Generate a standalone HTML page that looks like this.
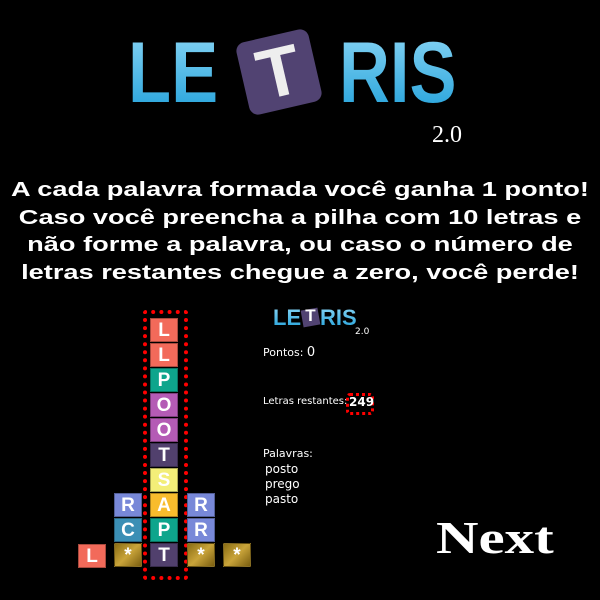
<!DOCTYPE html>
<html><head><meta charset="utf-8"><style>
body{margin:0;width:600px;height:600px;background:#000;position:relative;overflow:hidden;font-family:"Liberation Sans",sans-serif}
.a{position:absolute}
.logo{font-weight:bold;background:linear-gradient(#8fd8f6,#1a9dd8);-webkit-background-clip:text;background-clip:text;color:transparent}
.t{line-height:27.5px;color:#fff;font-weight:bold;font-size:20px;text-align:center;width:460px;left:70px;top:177px;font-family:"Liberation Sans",sans-serif;transform:scaleX(1.36);transform-origin:50% 0;white-space:nowrap}
.c{position:absolute;width:28px;height:24px;color:#fff;font-size:19px;font-weight:bold;text-align:center;line-height:24px;border:1px solid rgba(0,0,0,.3);box-sizing:border-box}
.g{background:linear-gradient(135deg,#8a6d14,#c9a43a,#7a5e10)}
.s{color:#fff;font-size:11px;font-family:"DejaVu Sans",sans-serif}
</style></head><body>
<div class="a logo" style="left:128px;top:24px;font-size:86px;transform:scaleX(0.82);transform-origin:0 0">LE</div>
<div class="a" style="left:242px;top:35px;width:74px;height:74px;background:#514372;border-radius:9px;transform:rotate(-13deg)"></div>
<div class="a" style="left:254px;top:32px;width:50px;font-size:70px;font-weight:bold;color:#eee;text-align:center;transform:rotate(-13deg)">T</div>
<div class="a logo" style="left:339px;top:24px;font-size:86px;transform:scaleX(0.82);transform-origin:0 0">RIS</div>
<div class="a" style="left:432px;top:122px;color:#fff;font-size:24px;font-family:'Liberation Serif',serif">2.0</div>
<div class="a t">A cada palavra formada você ganha 1 ponto!<br>Caso você preencha a pilha com 10 letras e<br>não forme a palavra, ou caso o número de<br>letras restantes chegue a zero, você perde!</div>

<div class="a" style="left:143px;top:310px;width:37px;height:262px;border:4px dotted #f00;border-radius:3px"></div>
<div class="c" style="left:150px;top:318px;background:#f26a5a">L</div>
<div class="c" style="left:150px;top:343px;background:#f26a5a">L</div>
<div class="c" style="left:150px;top:368px;background:#0ea58c">P</div>
<div class="c" style="left:150px;top:393px;background:#b45bb5">O</div>
<div class="c" style="left:150px;top:418px;background:#b45bb5">O</div>
<div class="c" style="left:150px;top:443px;background:#51406d">T</div>
<div class="c" style="left:150px;top:468px;background:#f3ee78">S</div>
<div class="c" style="left:150px;top:493px;background:#f8bc2d">A</div>
<div class="c" style="left:150px;top:518px;background:#0ea58c">P</div>
<div class="c" style="left:150px;top:543px;background:#51406d">T</div>
<div class="c" style="left:114px;top:493px;background:#7888d8">R</div>
<div class="c" style="left:114px;top:518px;background:#3b8fb5">C</div>
<div class="c g" style="left:114px;top:543px">*</div>
<div class="c" style="left:78px;top:544px;background:#f26a5a">L</div>
<div class="c" style="left:187px;top:493px;background:#7888d8">R</div>
<div class="c" style="left:187px;top:518px;background:#7888d8">R</div>
<div class="c g" style="left:187px;top:543px">*</div>
<div class="c g" style="left:223px;top:543px">*</div>

<div class="a logo" style="left:273px;top:305px;font-size:22px">LE</div>
<div class="a" style="left:302px;top:309px;width:17px;height:17px;background:#514372;transform:rotate(-10deg)"></div>
<div class="a" style="left:302px;top:306px;width:17px;text-align:center;color:#fff;font-weight:bold;font-size:17px">T</div>
<div class="a logo" style="left:320px;top:305px;font-size:22px">RIS</div>
<div class="a s" style="left:355px;top:327px;font-size:9px">2.0</div>
<div class="a s" style="left:263px;top:345px">Pontos: <span style="font-size:13px">0</span></div>
<div class="a s" style="left:263px;top:396px;font-size:10px">Letras restantes:</div>
<div class="a" style="left:346px;top:393px;width:22px;height:16px;border:3px dotted #f00;border-radius:4px"></div>
<div class="a s" style="left:349px;top:395px;font-size:12px;font-weight:bold">249</div>
<div class="a s" style="left:263px;top:447px">Palavras:</div>
<div class="a s" style="left:265px;top:462px;font-size:12px;line-height:15px">posto<br>prego<br>pasto</div>

<div class="a" style="left:436px;top:511px;color:#fff;font-size:46px;font-weight:bold;font-family:'Liberation Serif',serif;transform:scaleX(1.28);transform-origin:0 0">Next</div>
</body></html>
